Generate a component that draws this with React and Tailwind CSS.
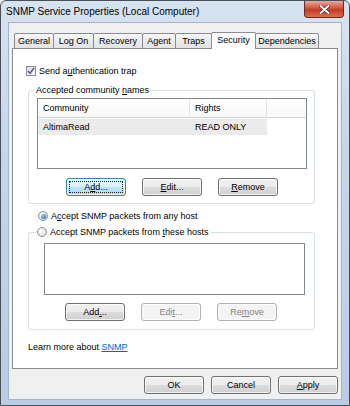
import React from "react";

const font = "font-['Liberation_Sans',Arial,sans-serif]";

const Btn = ({ children, focused, disabled, className = "" }) => {
  let look =
    "border-[#707070] bg-[linear-gradient(#f2f2f2,#ebebeb_50%,#dddddd_50%,#cfcfcf)] text-black";
  if (focused)
    look =
      "border-[#3c7fb1] bg-[linear-gradient(#eaf6fd,#d9f0fc_50%,#bee6fd_50%,#a7d9f5)] text-black";
  if (disabled) look = "border-[#adb2b5] bg-[#f4f4f4] text-[#838383]";
  return (
    <button
      className={`relative w-[60px] h-[18px] rounded-[3px] border text-[9px] leading-none flex items-center justify-center shadow-[inset_0_0_0_1px_rgba(255,255,255,0.7)] ${look} ${className}`}
    >
      {focused && (
        <span className="absolute inset-[2px] border border-dotted border-[#222]" />
      )}
      <span>{children}</span>
    </button>
  );
};

const Checkbox = () => (
  <span className="w-[10px] h-[10px] border border-[#8f8f8f] bg-[linear-gradient(135deg,#dcdcdc,#fbfbfb)] flex items-center justify-center">
    <svg width="8" height="8" viewBox="0 0 8 8">
      <path d="M1 4 L3 6.3 L7 1" fill="none" stroke="#4a5f97" strokeWidth="1.5" />
    </svg>
  </span>
);

const Radio = ({ checked }) => (
  <span className="w-[10px] h-[10px] rounded-full border border-[#8e8f8f] bg-[radial-gradient(circle_at_35%_35%,#ffffff,#d4d4d4)] flex items-center justify-center">
    {checked && (
      <span className="w-[5px] h-[5px] rounded-full bg-[radial-gradient(circle_at_35%_35%,#8fd3ff,#1a5c9a)]" />
    )}
  </span>
);

const tabs = [
  { name: "General", w: "w-[40px]" },
  { name: "Log On", w: "w-[41px]" },
  { name: "Recovery", w: "w-[50px]" },
  { name: "Agent", w: "w-[34px]" },
  { name: "Traps", w: "w-[37px]" },
  { name: "Security", w: "w-[45px]", active: true },
  { name: "Dependencies", w: "w-[64px]" },
];

export default function App() {
  return (
    <div
      className={`${font} w-[350px] h-[406px] flex flex-col border border-[#4a4f57] rounded-t-[6px] bg-[linear-gradient(180deg,#d6e3f1,#c3d6ea_40%,#b8cde5)] text-black overflow-hidden`}
    >
      {/* Title bar */}
      <div className="h-[21px] flex items-start shrink-0">
        <span className="pl-[5px] pt-[5px] text-[10px] leading-[12px] text-black">
          SNMP Service Properties (Local Computer)
        </span>
        <div className="ml-auto mr-[5px] w-[40px] h-[17px] rounded-b-[4px] border border-t-0 border-[#6b2a22] bg-[linear-gradient(#e9a99c,#d3533f_45%,#c23a21_55%,#d8704a)] flex items-center justify-center">
          <svg width="11" height="9" viewBox="0 0 11 9">
            <path
              d="M1.5 1 L9.5 8 M9.5 1 L1.5 8"
              stroke="#4a1a14"
              strokeWidth="3.2"
              strokeLinecap="round"
            />
            <path
              d="M1.5 1 L9.5 8 M9.5 1 L1.5 8"
              stroke="#ffffff"
              strokeWidth="2"
              strokeLinecap="round"
            />
          </svg>
        </div>
      </div>

      {/* Client area */}
      <div className="mx-[7px] mb-[5px] flex-1 flex flex-col bg-[#f0f0f0] border border-[#a4b5c9] pt-[9px] pl-[3px] pr-[5px]">
        {/* Tabs */}
        <div className="flex items-end h-[17px] pl-[2px]">
          {tabs.map((t) =>
            t.active ? (
              <div
                key={t.name}
                className={`${t.w} h-[17px] relative z-10 -ml-[1px] bg-white border border-b-0 border-[#898c95] rounded-t-[2px] text-[9px] leading-none flex items-start justify-center pt-[3px]`}
              >
                {t.name}
              </div>
            ) : (
              <div
                key={t.name}
                className={`${t.w} h-[16px] border border-[#898c95] -ml-[1px] first:ml-0 rounded-t-[2px] bg-[linear-gradient(#f7f7f7,#ececec_50%,#e3e3e3)] text-[9px] leading-none flex items-start justify-center pt-[3px]`}
              >
                {t.name}
              </div>
            )
          )}
        </div>

        {/* Panel */}
        <div className="-mt-[1px] w-[326px] h-[321px] bg-white border border-[#898c95] text-[9px] leading-[12px] flex flex-col">
          <div className="mt-[16px] ml-[13px] h-[12px] flex items-center gap-[3px]">
            <Checkbox />
            <span>
              Send a<u>u</u>thentication trap
            </span>
          </div>

          <fieldset className="mt-[7px] ml-[15px] w-[287px] border border-[#d5dfe5] rounded-[3px] pb-[7px]">
            <legend className="ml-[6px] px-[1px] leading-[12px]">
              Accepted community <u>n</u>ames
            </legend>
            <div className="mt-[2px] ml-[8px] w-[270px] h-[71px] border border-[#828790] flex flex-col">
              <div className="h-[19px] flex border-b border-[#d5d5d5] bg-[linear-gradient(#ffffff,#f7f8f9)]">
                <div className="w-[152px] border-r border-[#e3e5e8] pl-[5px] flex items-center">
                  Community
                </div>
                <div className="w-[77px] border-r border-[#e3e5e8] pl-[5px] flex items-center">
                  Rights
                </div>
              </div>
              <div className="mt-[1px] w-[229px] h-[16px] bg-[#ebebeb] flex items-center">
                <span className="w-[152px] pl-[5px]">AltimaRead</span>
                <span className="pl-[5px]">READ ONLY</span>
              </div>
            </div>
            <div className="mt-[9px] ml-[37px] flex gap-[16px]">
              <Btn focused>
                A<u>d</u>d...
              </Btn>
              <Btn>
                <u>E</u>dit...
              </Btn>
              <Btn>
                <u>R</u>emove
              </Btn>
            </div>
          </fieldset>

          <div className="mt-[6px] ml-[25px] h-[12px] flex items-center gap-[3px]">
            <Radio checked />
            <span>
              A<u>c</u>cept SNMP packets from any host
            </span>
          </div>

          <fieldset className="mt-[4px] ml-[15px] w-[287px] border border-[#d5dfe5] rounded-[3px] pb-[8px]">
            <legend className="ml-[7px] pl-[1px] pr-[3px] leading-[12px]">
              <span className="flex items-center gap-[3px]">
                <Radio />
                <span>
                  Accept SNMP packets from <u>t</u>hese hosts
                </span>
              </span>
            </legend>
            <div className="mt-[5px] ml-[15px] w-[261px] h-[52px] border border-[#828790] bg-white" />
            <div className="mt-[8px] ml-[36px] flex gap-[16px]">
              <Btn className="border-[#555]">
                Add<u>.</u>..
              </Btn>
              <Btn disabled>
                Edi<u>t</u>...
              </Btn>
              <Btn disabled>
                Re<u>m</u>ove
              </Btn>
            </div>
          </fieldset>

          <div className="mt-[11px] ml-[15px] h-[12px] flex items-center">
            <span>Learn more about&nbsp;</span>
            <a className="text-[#0066cc] underline">SNMP</a>
          </div>
        </div>

        {/* Bottom buttons */}
        <div className="mt-[7px] w-[326px] flex justify-end gap-[7px]">
          <Btn>OK</Btn>
          <Btn>Cancel</Btn>
          <Btn>
            <u>A</u>pply
          </Btn>
        </div>
      </div>
    </div>
  );
}
